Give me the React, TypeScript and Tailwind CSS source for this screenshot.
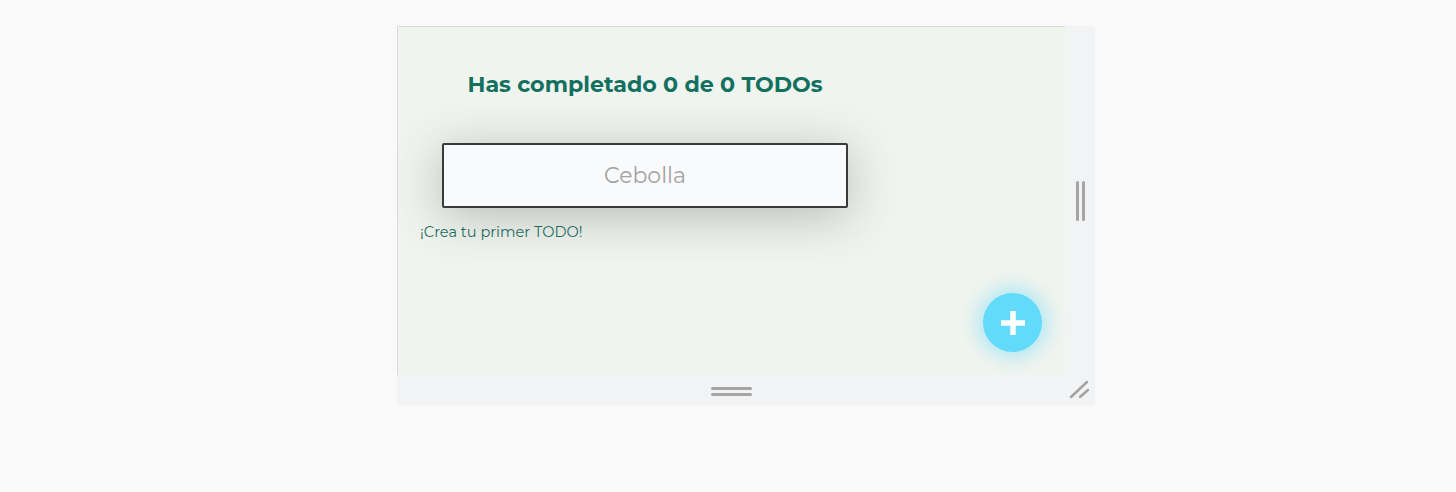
const FONT = "font-['Montserrat','Open_Sans','Liberation_Sans',sans-serif]";

function ResizeGrip() {
  return (
    <svg width="22" height="20" viewBox="0 0 22 20" aria-hidden>
      <line x1="2" y1="18" x2="18" y2="3" stroke="#a3a3a3" strokeWidth="2.5" strokeLinecap="round" />
      <line x1="11" y1="18" x2="19" y2="11" stroke="#a3a3a3" strokeWidth="2.5" strokeLinecap="round" />
    </svg>
  );
}

function PlusIcon() {
  return (
    <svg width="24" height="24" viewBox="0 0 24 24" aria-hidden>
      <rect x="0" y="9.25" width="24" height="5.5" fill="white" />
      <rect x="9.25" y="0" width="5.5" height="24" fill="white" />
    </svg>
  );
}

export default function App() {
  return (
    <div className={`min-h-[492px] w-full bg-[#f8f9f8] pt-[26px] ${FONT}`}>
      <div className="ml-[397px] grid w-[698px] grid-cols-[668px_30px] grid-rows-[349px_30px]">
        {/* Panel */}
        <div className="relative border-l border-t border-[#d9d9d9] bg-[#f0f4ef] pl-[22px]">
          <div className="flex w-[450px] flex-col">
            <h1 className="mt-[46px] text-center text-[22.2px] font-bold leading-[24px] text-[#13705f]">
              Has completado 0 de 0 TODOs
            </h1>
            <input
              placeholder="Cebolla"
              className="mx-auto mt-[46px] h-[65px] w-[406px] rounded-[2px] border-2 border-[#3a3a3a] bg-[#f9fafc] text-center text-[22px] text-[#444] shadow-[0_8px_48px_rgba(60,70,60,0.32)] outline-none placeholder:text-[#a3a3a3]"
            />
            <p className="mt-[15px] text-[14.6px] leading-[18px] text-[#1f6b5f]">
              ¡Crea tu primer TODO!
            </p>
          </div>

          <button
            type="button"
            aria-label="Crear TODO"
            className="absolute bottom-[23px] right-[23px] flex h-[59px] w-[59px] items-center justify-center rounded-full bg-[#62dafa] shadow-[0_0_18px_6px_rgba(98,218,250,0.45)]"
          >
            <PlusIcon />
          </button>
        </div>

        {/* Right strip */}
        <div className="flex items-start justify-center bg-[#f2f3f4] pt-[155px]">
          <div className="flex gap-[3px]">
            <span className="h-[40px] w-[3px] rounded-full bg-[#a5a5a5]" />
            <span className="h-[40px] w-[3px] rounded-full bg-[#a5a5a5]" />
          </div>
        </div>

        {/* Bottom strip */}
        <div className="flex items-center justify-center bg-[#f2f3f4]">
          <div className="flex flex-col gap-[3px] pt-[2px]">
            <span className="h-[3px] w-[41px] rounded-full bg-[#a5a5a5]" />
            <span className="h-[3px] w-[41px] rounded-full bg-[#a5a5a5]" />
          </div>
        </div>

        {/* Corner */}
        <div className="flex items-end justify-start bg-[#f2f3f4] pb-[6px] pl-[4px]">
          <ResizeGrip />
        </div>
      </div>
    </div>
  );
}
